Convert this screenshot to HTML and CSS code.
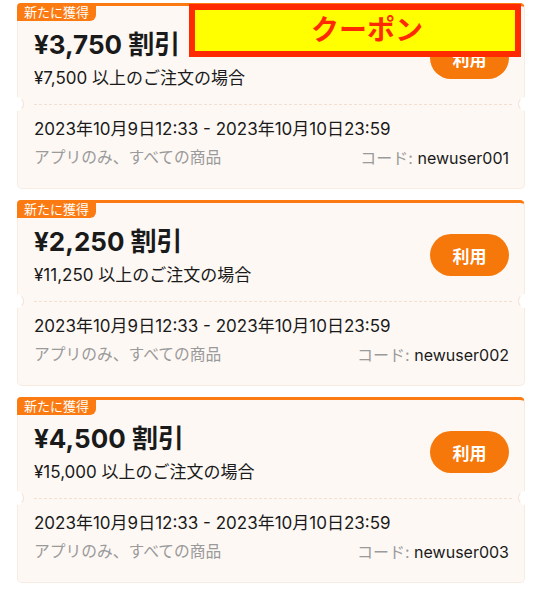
FILE: index.html
```html
<!DOCTYPE html>
<html lang="ja">
<head>
  <meta charset="UTF-8">
  <meta name="viewport" content="width=device-width, initial-scale=1.0">
  <title>クーポン</title>
  <link rel="stylesheet" href="styles.css">
</head>
<body>

  <div class="page">
    <div class="label">クーポン</div>

    <div class="coupon">
      <span class="badge">新たに獲得</span>
      <div class="coupon-top">
        <div class="amount">
          <div class="title">¥3,750 割引</div>
          <div class="condition">¥7,500 以上のご注文の場合</div>
        </div>
        <button class="use">利用</button>
      </div>
      <div class="divider"></div>
      <div class="coupon-bottom">
        <div class="period">2023年10月9日12:33 - 2023年10月10日23:59</div>
        <div class="info">
          <span class="scope">アプリのみ、すべての商品</span>
          <span class="code"><span class="muted">コード:</span> newuser001</span>
        </div>
      </div>
    </div>

    <div class="coupon">
      <span class="badge">新たに獲得</span>
      <div class="coupon-top">
        <div class="amount">
          <div class="title">¥2,250 割引</div>
          <div class="condition">¥11,250 以上のご注文の場合</div>
        </div>
        <button class="use">利用</button>
      </div>
      <div class="divider"></div>
      <div class="coupon-bottom">
        <div class="period">2023年10月9日12:33 - 2023年10月10日23:59</div>
        <div class="info">
          <span class="scope">アプリのみ、すべての商品</span>
          <span class="code"><span class="muted">コード:</span> newuser002</span>
        </div>
      </div>
    </div>

    <div class="coupon">
      <span class="badge">新たに獲得</span>
      <div class="coupon-top">
        <div class="amount">
          <div class="title">¥4,500 割引</div>
          <div class="condition">¥15,000 以上のご注文の場合</div>
        </div>
        <button class="use">利用</button>
      </div>
      <div class="divider"></div>
      <div class="coupon-bottom">
        <div class="period">2023年10月9日12:33 - 2023年10月10日23:59</div>
        <div class="info">
          <span class="scope">アプリのみ、すべての商品</span>
          <span class="code"><span class="muted">コード:</span> newuser003</span>
        </div>
      </div>
    </div>
  </div>

</body>
</html>
```

FILE: styles.css
```css
body {
  margin: 0;
  background-color: #ffffff;
  font-family: Inter, "Noto Sans CJK JP", sans-serif;
  color: #1a1a1a;
}

.page {
  position: relative;
  display: flex;
  flex-direction: column;
  gap: 11px;
  padding: 3px 18px 0 17px;
}

/* highlight box laid over the first card */
.label {
  position: absolute;
  top: 4px;
  left: 189px;
  width: 332px;
  height: 53px;
  box-sizing: border-box;
  border: 6px solid #ff2a00;
  background-color: #ffff00;
  color: #ff2a00;
  font-size: 28px;
  font-weight: 700;
  line-height: 41px;
  text-align: center;
  padding-left: 24px;
  z-index: 2;
}

.coupon {
  position: relative;
  background-color: #fdf8f4;
  border: 1px solid #f8ebe2;
  border-top: 3px solid #fb7b12;
  border-radius: 5px;
}

.badge {
  position: absolute;
  top: -3px;
  left: -1px;
  background-color: #fb7b12;
  color: #ffffff;
  font-size: 13px;
  line-height: 18px;
  padding: 0 7px;
  border-radius: 4px 0 6px 0;
}

.coupon-top {
  display: flex;
  align-items: center;
  justify-content: space-between;
  padding: 22px 15px 14px 16px;
}

.title {
  font-size: 26px;
  font-weight: 700;
  line-height: 34px;
}

.condition {
  font-size: 17px;
  line-height: 24px;
  margin-top: 4px;
}

.use {
  width: 79px;
  height: 42px;
  border: none;
  border-radius: 21px;
  background-color: #f7780a;
  color: #ffffff;
  font-family: inherit;
  font-size: 17px;
  font-weight: 700;
  margin-top: -2px;
  cursor: pointer;
}

.divider {
  position: relative;
  margin: 0 12px 0 16px;
  border-top: 1px dashed #f1dfd2;
}

/* half-circle cut-outs on both card edges */
.divider::before,
.divider::after {
  content: "";
  position: absolute;
  top: -8px;
  width: 14px;
  height: 14px;
  border-radius: 50%;
  background-color: #ffffff;
  border: 1px solid transparent;
  box-sizing: border-box;
}

.divider::before {
  left: -24px;
  border-right-color: #f3e2d6;
}

.divider::after {
  right: -20px;
  border-left-color: #f3e2d6;
}

.coupon-bottom {
  padding: 12px 15px 18px 16px;
}

.period {
  font-size: 17px;
  line-height: 24px;
}

.info {
  display: flex;
  justify-content: space-between;
  margin-top: 5px;
  font-size: 15.75px;
  line-height: 24px;
}

.scope,
.muted {
  color: #9a9a9a;
}

.code {
  font-size: 16px;
}
```
